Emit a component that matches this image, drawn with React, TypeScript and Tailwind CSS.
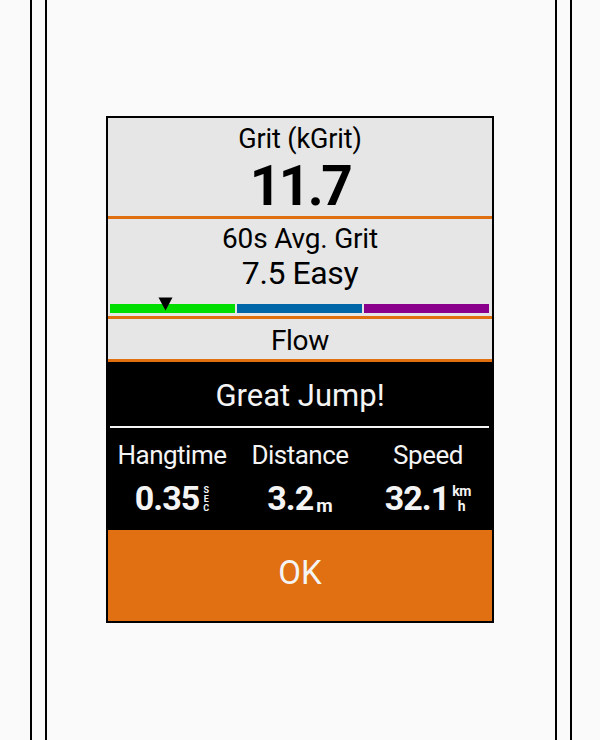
import React from "react";

const font = { fontFamily: "Roboto, 'Liberation Sans', sans-serif" };

function Stat({ label, value, unit }: { label: string; value: string; unit: React.ReactNode }) {
  return (
    <div className="flex flex-col items-center">
      <div className="text-[26px] leading-[30px] tracking-[-0.5px] text-[#f4f4f4]">{label}</div>
      <div className="flex items-end mt-[10px] h-[36px]">
        <span className="text-[34px] leading-[36px] font-bold tracking-[-1px] text-[#f4f4f4]">{value}</span>
        {unit}
      </div>
    </div>
  );
}

export default function App() {
  return (
    <div className="w-[600px] h-[740px] bg-[#fafafa] overflow-hidden" style={font}>
      <div className="ml-[30px] w-[542px] h-full border-x-2 border-black px-[13px]">
        <div className="h-full border-x-2 border-black pt-[116px]">
          <div className="ml-[59px] w-[388px] h-[507px] border-2 border-black flex flex-col bg-[#e6e6e6]">
            {/* Grit */}
            <div className="h-[98px] flex flex-col items-center pt-[4px]">
              <div className="text-[27px] leading-[34px] text-black tracking-[-0.1px]">Grit (kGrit)</div>
              <div className="text-[55px] leading-[56px] font-bold text-black tracking-[-2.5px] mt-[2px]">11.7</div>
            </div>
            <div className="h-[3px] bg-[#e0700f]" />
            {/* 60s Avg */}
            <div className="h-[97px] flex flex-col items-center pt-[4px]">
              <div className="text-[28px] leading-[32px] text-black tracking-[-0.2px]">60s Avg. Grit</div>
              <div className="text-[32px] leading-[36px] text-black tracking-[-0.4px]">7.5 Easy</div>
              <div className="relative w-full mt-[13px] pl-[2px] pr-[3px] flex gap-[2px]">
                <div className="h-[9px] flex-1 bg-[#00dd00]" />
                <div className="h-[9px] flex-1 bg-[#0066a8]" />
                <div className="h-[9px] flex-1 bg-[#8b008b]" />
                <svg className="absolute left-[50px] top-[-7px]" width="15" height="14" viewBox="0 0 15 14">
                  <polygon points="0.5,0.5 14.5,0.5 7.5,13.5" fill="#000" />
                </svg>
              </div>
            </div>
            <div className="h-[3px] bg-[#e0700f]" />
            {/* Flow */}
            <div className="h-[40px] flex items-center justify-center pt-[4px]">
              <div className="text-[28px] leading-[34px] text-black tracking-[-0.3px]">Flow</div>
            </div>
            <div className="h-[3px] bg-[#e0700f]" />
            {/* Black panel */}
            <div className="h-[168px] bg-black flex flex-col">
              <div className="h-[64px] flex items-center justify-center pt-[4px]">
                <div className="text-[31px] leading-[34px] text-[#f4f4f4] tracking-[0px]">Great Jump!</div>
              </div>
              <div className="ml-[2px] mr-[3px] h-[2px] bg-[#f4f4f4]" />
              <div className="grid grid-cols-3 pt-[12px]">
                <Stat
                  label="Hangtime"
                  value="0.35"
                  unit={
                    <span className="ml-[4px] mb-[3px] flex flex-col items-center text-[9px] leading-[9px] font-bold text-[#f4f4f4]">
                      <span>S</span>
                      <span>E</span>
                      <span>C</span>
                    </span>
                  }
                />
                <Stat
                  label="Distance"
                  value="3.2"
                  unit={<span className="ml-[3px] text-[19px] leading-[20px] font-bold text-[#f4f4f4]">m</span>}
                />
                <Stat
                  label="Speed"
                  value="32.1"
                  unit={
                    <span className="ml-[3px] mb-[3px] flex flex-col items-center gap-[1px] font-bold text-[#f4f4f4]">
                      <span className="text-[14px] leading-[14px] tracking-[-0.3px]">km</span>
                      <span className="text-[14px] leading-[14px]">h</span>
                    </span>
                  }
                />
              </div>
            </div>
            {/* OK */}
            <div className="flex-1 bg-[#e07012] flex items-center justify-center pb-[6px]">
              <div className="text-[33px] leading-[36px] text-[#f4f4f4]">OK</div>
            </div>
          </div>
        </div>
      </div>
    </div>
  );
}
